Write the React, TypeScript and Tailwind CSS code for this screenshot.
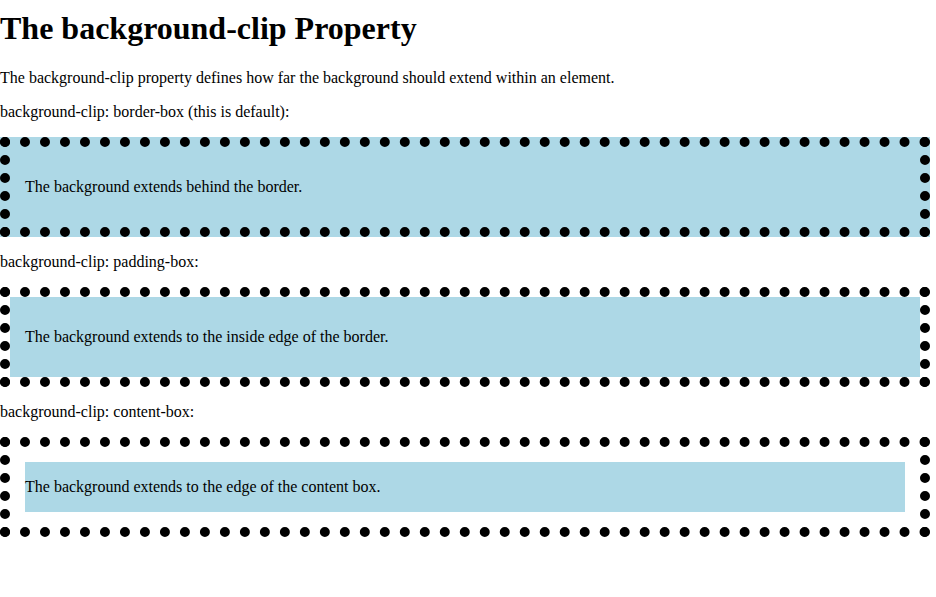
const boxes = [
  {
    label: 'background-clip: border-box (this is default):',
    text: 'The background extends behind the border.',
    clip: 'bg-clip-border',
  },
  {
    label: 'background-clip: padding-box:',
    text: 'The background extends to the inside edge of the border.',
    clip: 'bg-clip-padding',
  },
  {
    label: 'background-clip: content-box:',
    text: 'The background extends to the edge of the content box.',
    clip: 'bg-clip-content',
  },
]

export default function App() {
  return (
    <div className="min-h-[597px] bg-white">
      <div className="flex w-[930px] flex-col pt-[10px] font-['Liberation_Serif','Times_New_Roman',serif] text-[16px] text-black">
        <h1 className="mb-[22px] text-[32px] font-bold leading-[37px]">The background-clip Property</h1>
        <p className="mb-4 leading-[18px]">
          The background-clip property defines how far the background should extend within an element.
        </p>
        {boxes.map((b) => (
          <div key={b.label} className="flex flex-col">
            <p className="mb-4 leading-[18px]">{b.label}</p>
            <div className={`mb-4 border-[10px] border-dotted border-black bg-[#add8e6] p-[15px] ${b.clip}`}>
              <p className="my-4 leading-[18px]">{b.text}</p>
            </div>
          </div>
        ))}
      </div>
    </div>
  )
}
